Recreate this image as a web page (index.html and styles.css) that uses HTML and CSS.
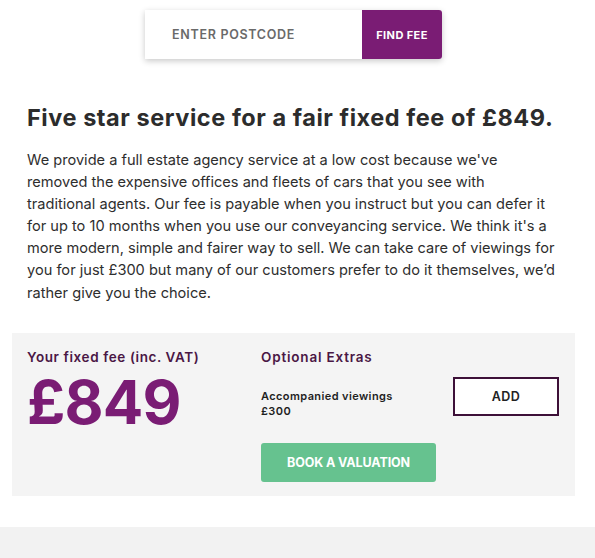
FILE: index.html
```html
<!DOCTYPE html>
<html>
<head>
<meta charset="utf-8">
<link rel="stylesheet" href="styles.css">
</head>
<body>
<div class="page">
  <div class="search">
    <div class="search-input">ENTER POSTCODE</div>
    <div class="search-btn">FIND FEE</div>
  </div>
  <h1 class="title">Five star service for a fair fixed fee of £849.</h1>
  <p class="intro">We provide a full estate agency service at a low cost because we've<br>removed the expensive offices and fleets of cars that you see with<br>traditional agents. Our fee is payable when you instruct but you can defer it<br>for up to 10 months when you use our conveyancing service. We think it's a<br>more modern, simple and fairer way to sell. We can take care of viewings for<br>you for just £300 but many of our customers prefer to do it themselves, we’d<br>rather give you the choice.</p>
  <div class="fee-box">
    <div class="fee-col">
      <div class="label label-fee">Your fixed fee (inc. VAT)</div>
      <div class="price">£849</div>
    </div>
    <div class="extras-col">
      <div class="label label-extra">Optional Extras</div>
      <div class="extra-row">
        <div class="extra-text">Accompanied viewings<br>£300</div>
        <div class="add-btn">ADD</div>
      </div>
      <div class="book-btn">BOOK A VALUATION</div>
    </div>
  </div>
</div>
<div class="footer"></div>
</body>
</html>
```
FILE: styles.css
```css
* { box-sizing: border-box; }
html, body { margin: 0; padding: 0; background: #fff; }
body { font-family: Inter, "Open Sans", sans-serif; color: #2e2e2e; }
.page { padding: 10px 20px 0 12px; }
.search {
  display: flex;
  width: 297px;
  height: 49px;
  margin-left: 133px;
  box-shadow: 0 2px 6px rgba(0,0,0,0.22);
  border-radius: 0 3px 3px 0;
}
.search-input {
  width: 217px;
  background: #fff;
  display: flex;
  align-items: center;
  padding-left: 27px;
  font-size: 12.5px;
  font-weight: 600;
  color: #6a6a6a;
  letter-spacing: 0.7px;
}
.search-btn {
  flex: 1;
  background: #7a1c74;
  color: #fff;
  display: flex;
  align-items: center;
  justify-content: center;
  font-size: 11px;
  font-weight: 700;
  letter-spacing: 0.4px;
  border-radius: 0 3px 3px 0;
}
.title {
  margin: 44px 0 0 15px;
  font-size: 23.5px;
  font-weight: 700;
  color: #2c2c2c;
  line-height: 30px;
  letter-spacing: 0.55px;
  white-space: nowrap;
}
.intro {
  margin: 16px 0 0 15px;
  font-size: 14.6px;
  line-height: 22.1px;
  color: #2e2e2e;
  white-space: nowrap;
}
.fee-box {
  margin-top: 29px;
  width: 563px;
  height: 163px;
  background: #f4f4f4;
  display: flex;
  padding: 15px 0 0 15px;
}
.fee-col { width: 234px; }
.label {
  font-size: 13.5px;
  font-weight: 600;
  color: #4a1745;
  line-height: 18px;
}
.label-fee { letter-spacing: 0.6px; }
.label-extra { letter-spacing: 0.8px; }
.price {
  font-size: 60px;
  font-weight: 700;
  color: #7a1c74;
  line-height: 60px;
  margin-top: 6px;
  letter-spacing: -0.8px;
}
.extras-col { flex: 1; }
.extra-row {
  display: flex;
  align-items: center;
  justify-content: space-between;
  margin-top: 11px;
  width: 298px;
}
.extra-text {
  font-size: 11px;
  font-weight: 600;
  color: #1f1f1f;
  line-height: 15px;
  letter-spacing: 0.4px;
  padding-top: 12px;
}
.add-btn {
  width: 106px;
  height: 39px;
  border: 2px solid #3d1038;
  background: #fff;
  display: flex;
  align-items: center;
  justify-content: center;
  font-size: 12.5px;
  font-weight: 600;
  color: #222;
  letter-spacing: 0.5px;
  align-self: flex-start;
}
.book-btn {
  margin-top: 24px;
  width: 175px;
  height: 39px;
  background: #66c28f;
  border-radius: 3px;
  color: #fff;
  display: flex;
  align-items: center;
  justify-content: center;
  font-size: 12.5px;
  font-weight: 700;
  letter-spacing: -0.1px;
}
.footer {
  margin-top: 31px;
  height: 40px;
  background: #f2f2f2;
}
```
